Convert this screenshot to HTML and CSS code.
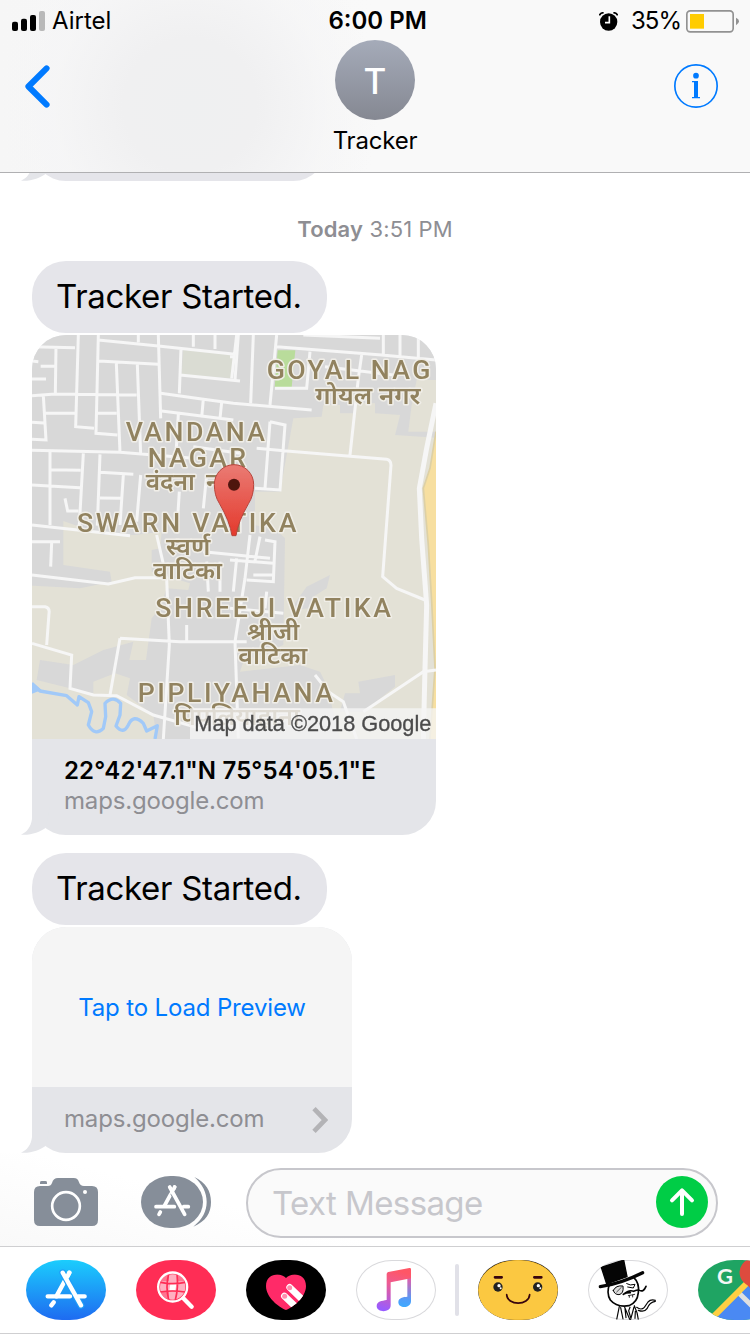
FILE: index.html
```html
<!DOCTYPE html>
<html lang="en">
<head>
<meta charset="utf-8">
<title>Messages</title>
<link rel="stylesheet" href="styles.css">
</head>
<body>
<div class="phone">
  <header class="header">
    <div class="status">
      <div class="carrier">
        <svg class="signal" viewBox="0 0 99 60"><rect y="32" width="18" height="28" rx="6"/><rect x="27" y="23" width="18" height="37" rx="6"/><rect x="54" y="12" width="18" height="48" rx="6"/><rect x="81" width="18" height="60" rx="6" fill="#b9b9b9"/></svg>
        <span class="carrier-name">Airtel</span>
      </div>
      <div class="clock">6:00 PM</div>
      <div class="power">
        <svg class="alarm" viewBox="0 0 57 57"><circle cx="29" cy="30" r="26"/><path d="M1 10Q5 2 14 2M43 2Q52 2 56 10" fill="none" stroke="#000" stroke-width="5"/><path d="M31 13V32H18" fill="none" stroke="#fff" stroke-width="5"/></svg>
        <span class="percent">35%</span>
        <svg class="battery" viewBox="0 0 159 69"><rect x="2.5" y="2.5" width="139" height="63" rx="10" fill="none" stroke="#929292" stroke-width="5"/><rect x="12" y="12" width="42" height="44" fill="#fc0"/><path d="M150 23Q159 27 159 34T150 46Z" fill="#929292"/></svg>
      </div>
    </div>
    <div class="nav">
      <svg class="back" viewBox="0 0 74 128"><path d="M64 10L10 64L64 118" fill="none" stroke="#007aff" stroke-width="18" stroke-linecap="round" stroke-linejoin="round"/></svg>
      <div class="contact">
        <div class="avatar">T</div>
        <div class="name">Tracker</div>
      </div>
      <svg class="info" viewBox="0 0 132 132"><circle cx="66" cy="66" r="63.5" fill="none" stroke="#007aff" stroke-width="5"/><circle cx="66" cy="35" r="8.5" fill="#007aff"/><path d="M54 51H72V99H78V103H54V99H60V55H54Z" fill="#007aff"/></svg>
    </div>
  </header>

  <main class="thread">
    <div class="bubble bubble-cut"><svg class="tail" viewBox="0 0 29 40"><path d="M11 0V24C10 32 6 37 0 39.700C10 40.500 19 37 24.500 33L29 12L20 0Z"/></svg></div>
    <div class="stamp"><b>Today</b> 3:51 PM</div>
    <div class="bubble">Tracker Started.</div>
    <div class="card card-map">
      <svg class="map" viewBox="36 30 1212 1212">
        <defs><filter id="soft" x="0" y="0" width="100%" height="100%"><feGaussianBlur stdDeviation="2.200"/></filter>
        <linearGradient id="pin" x1="0" y1="0" x2="0" y2="1"><stop stop-color="#ea7b74"/><stop offset="1" stop-color="#e4392c"/></linearGradient></defs>
        <g filter="url(#soft)">
        <rect width="1280" height="1280" fill="#d8d8d8"/>
        <g fill="#e3e1d6">
          <path d="M490 75L640 90L635 160L485 148Z" fill="#dadcd3"/>
          <path d="M130 588L250 630L345 630L425 620L420 670L395 675V740L510 775L505 795L440 790L420 850L395 880L378 1005L328 1005L340 950L250 975L160 1020L60 1005L50 1065L150 1090L220 1105L220 1070L285 1045L330 1060L320 1110L400 1170L410 1242H0V780L180 790L275 770L270 740L130 720Z"/>
          <path d="M820 280L905 275L910 240L960 240V265H1000L1005 235H1065V265L1140 270L1125 330L1248 338V1242H960L920 1080L900 1040L840 1020L660 1040L670 1010L790 960L795 640L775 620L705 600L705 500L780 500Z"/>
          <path d="M1190 165H1248V320H1165L1175 240Z"/>
        </g>
        <path d="M860 785L930 750L920 790L880 815L870 850L810 855ZM975 1105L1020 1105L1015 1070L1125 1050V1085L1030 1160H960Z" fill="#d8d8d8"/>
        <path d="M773 76H826L815 187H764Z" fill="#b9dc9b"/>
        <path d="M1248 320L1230 430L1210 490L1225 660L1235 830L1245 1030L1230 1242H1260V320Z" fill="#f7dfa0"/>
        <path d="M1248 320L1230 430L1210 490L1225 660L1235 830L1245 1030L1230 1242" fill="none" stroke="#ddd0a5" stroke-width="5"/>
        <g fill="none" stroke="#f6f6f6" stroke-width="9">
          <path d="M36 65L165 68M108 65L106 205M175 30L167 305L222 310M235 30L228 325L292 330M235 45L415 63L645 88M236 108L415 118M415 30L422 280M355 30V52M520 30V65M585 30V72M650 30L635 160M483 70L478 205M480 150L660 168M36 212L105 207L350 210M36 108L55 110M62 124L105 124M36 162L78 162M70 212L78 345L36 343M36 292L72 294M75 265L165 265M228 265L290 265M289 115L300 382M352 118L362 388M36 376L300 382L520 400"/>
          <path d="M422 205L545 222L640 235L875 255M425 258L640 285M550 222L545 278M605 232L600 280M475 268L468 385M90 380V600M36 480L180 488M90 434L182 436M190 385L178 600M240 388L232 602M240 442L340 448M310 450L300 600M240 519L304 520M362 450L350 590M135 520L143 558H175M36 600L330 632M520 365L660 385M478 500L470 625M560 450L550 550M660 480V625"/>
          <path d="M655 30L645 165M770 30L750 240M700 30L692 235M630 95H645M770 65L1085 90L1248 105M850 30L1080 40M1090 30V90M1140 30V100M1195 30V105M870 80L860 190L765 190M1025 90L1015 160L990 390M915 125L1120 150M750 290L795 300L780 495L705 490M750 290L735 490M710 370L800 378L1100 403Q1112 405 1113 420L1088 755L1130 790L1215 825"/>
          <path d="M690 630L675 760L645 950L655 1240M630 705L760 715M720 635L705 708M735 645L765 650L760 770L680 765M700 750H760M740 800L735 850M630 850L790 865M560 710L565 800M600 710V800M650 700L640 800M36 650H120M95 652L92 725M36 750L265 777L345 758H430M410 630L440 760L448 960L430 1242M300 940L480 950L680 950M500 900V950M300 940L270 1110M36 845H75Q90 848 87 865L80 960M36 955L155 990L150 1090L220 1110L290 1112L400 1170L540 1210M550 680L750 700M885 1050L925 1100L970 1130L1010 1242M1248 1035L1210 1040L1030 1160"/>
          <path d="M1248 235L1220 370L1198 490L1205 640L1220 840L1215 1030L1210 1242" stroke-width="15"/>
        </g>
        <path d="M36 1075L60 1098L140 1112L172 1140L177 1115L205 1133L215 1160L205 1200Q225 1235 250 1210L257 1175L255 1135Q280 1110 302 1135L300 1170L288 1203Q310 1230 325 1200Q340 1165 370 1195L380 1218L412 1202L405 1242" fill="none" stroke="#a1c9f8" stroke-width="10" stroke-linejoin="round"/>
        <path d="M36 1072L65 1095L36 1106Z" fill="#a1c9f8"/>
        <g class="place">
          <text x="740" y="161" textLength="491">GOYAL NAG</text>
          <text x="317" y="348" textLength="418">VANDANA</text>
          <text x="383" y="427" textLength="295">NAGAR</text>
          <text x="171" y="621" textLength="658">SWARN VATIKA</text>
          <text x="406" y="875" textLength="707">SHREEJI VATIKA</text>
          <text x="353" y="1130" textLength="586">PIPLIYAHANA</text>
        </g>
        <g class="place hindi" lang="hi">
          <text x="886" y="236" textLength="316" lengthAdjust="spacingAndGlyphs">गोयल नगर</text>
          <text x="377" y="495" textLength="148" lengthAdjust="spacingAndGlyphs">वंदना</text>
          <text x="558" y="495">न</text>
          <text x="438" y="690" textLength="133" lengthAdjust="spacingAndGlyphs">स्वर्ण</text>
          <text x="400" y="763" textLength="206" lengthAdjust="spacingAndGlyphs">वाटिका</text>
          <text x="681" y="945" textLength="157" lengthAdjust="spacingAndGlyphs">श्रीजी</text>
          <text x="655" y="1018" textLength="207" lengthAdjust="spacingAndGlyphs">वाटिका</text>
          <text x="462" y="1200" textLength="378" lengthAdjust="spacingAndGlyphs">पिपलियाहाना</text>
        </g>
        <path d="M510 1150H1248V1242H510Z" fill="#f5f5f5" opacity=".78"/>
        <text class="credit" x="523" y="1217" textLength="711" lengthAdjust="spacingAndGlyphs">Map data ©2018 Google</text>
        <path d="M636 632Q630 590 598 535Q583 512 583 478A59 59 0 0 1 701 478Q701 512 686 535Q654 590 648 632Z" fill="url(#pin)" stroke="#b7443b" stroke-width="3"/>
        <circle cx="642" cy="479" r="18" fill="#501410"/>
        </g>
      </svg>
      <div class="caption">
        <div class="title">22°42'47.1"N 75°54'05.1"E</div>
        <div class="site">maps.google.com</div>
      </div>
      <svg class="tail" viewBox="0 0 29 40"><path d="M11 0V24C10 32 6 37 0 39.700C10 40.500 19 37 24.500 33L29 12L20 0Z"/></svg>
    </div>
    <div class="bubble bubble-next">Tracker Started.</div>
    <div class="card card-preview">
      <div class="load">Tap to Load Preview</div>
      <div class="caption caption-row">
        <div class="site">maps.google.com</div>
        <svg class="chevron" viewBox="0 0 46 78"><path d="M5 5L38 39L5 73" fill="none" stroke="#b3b3b6" stroke-width="14"/></svg>
      </div>
      <svg class="tail" viewBox="0 0 29 40"><path d="M11 0V24C10 32 6 37 0 39.700C10 40.500 19 37 24.500 33L29 12L20 0Z"/></svg>
    </div>
  </main>

  <div class="compose">
    <svg class="camera" viewBox="0 0 192 144"><path d="M18 24H42Q51 24 54 15Q58 0 72 0H119Q132 0 135 13Q138 24 150 24H174Q192 24 192 42V126Q192 144 174 144H18Q0 144 0 126V42Q0 24 18 24Z"/><path d="M18 18V13Q18 9 23 9H34Q39 9 39 13V18Z"/><circle cx="96" cy="84" r="41.500" fill="none" stroke="#fff" stroke-width="8"/><circle cx="153" cy="42" r="6" fill="#fff"/></svg>
    <svg class="apps" viewBox="0 0 210 156"><rect width="186" height="156" rx="88" ry="78"/><path d="M160 3C195 20 210 45 210 78C210 111 195 136 157 152C185 130 197 105 197 78C197 50 185 25 160 3Z"/><g fill="none" stroke="#fff" stroke-width="11" stroke-linecap="round"><path d="M101 33L70 90"/><path d="M86 33L131 115" stroke="#868e99" stroke-width="17"/><path d="M86 33L131 115M101 33L92 50M45 92H100M128 92H142M58 108L54 115"/></g></svg>
    <div class="field">
      <span class="placeholder">Text Message</span>
      <svg class="send" viewBox="0 0 156 156"><circle cx="78" cy="78" r="78" fill="#00cd46"/><path d="M78 114V44M48 73L78 43L108 73" fill="none" stroke="#fff" stroke-width="12" stroke-linecap="round" stroke-linejoin="round"/></svg>
    </div>
  </div>

  <footer class="drawer">
    <div class="app app-store"><svg viewBox="0 0 240 180" fill="none" stroke="#fff" stroke-width="13" stroke-linecap="round"><path d="M130 38L91 109"/><path d="M110 38L165 136" stroke="#1f9df8" stroke-width="20"/><path d="M110 38L165 136M130 38L122 53M65 109H132M156 109H176M83 127L76 136"/></svg></div>
    <div class="app app-search"><svg viewBox="0 0 240 180"><circle cx="110" cy="81" r="38" fill="#ffb0c1"/><path d="M72 64H99V44Q76 48 72 64ZM122 44V64H147Q140 46 122 44ZM72 94H99V118Q80 114 72 94Z" fill="#ff7490"/><path d="M103 72H121L118 91H100Z" fill="#fff"/><path d="M74 67Q110 75 147 67M72 96Q110 90 147 96M98 42Q88 80 98 120M123 42Q128 80 118 120" stroke="#ff2d55" stroke-width="5" fill="none"/><circle cx="110" cy="81" r="43.500" fill="none" stroke="#fff" stroke-width="7"/><path d="M142 115L167 140" stroke="#fff" stroke-width="13" stroke-linecap="round"/></svg></div>
    <div class="app app-touch"><svg viewBox="0 0 240 180"><defs><clipPath id="heart"><path d="M120 54C103 36 60 40 60 78C60 113 99 142 120 150C141 142 180 113 180 78C180 40 137 36 120 54Z"/></clipPath></defs><g clip-path="url(#heart)"><path d="M50 30H190V160H50Z" fill="#ff2a68"/><g stroke="#fff" stroke-width="20" stroke-linecap="round"><path d="M131 82L190 139M115 108L165 156"/></g><g fill="#ff8eae"><circle cx="131" cy="83" r="7.500"/><circle cx="116" cy="109" r="7.500"/></g></g></svg></div>
    <div class="app app-music"><svg viewBox="0 0 240 180"><defs><linearGradient id="ml" gradientUnits="userSpaceOnUse" x1="120" y1="30" x2="85" y2="150"><stop stop-color="#ff5666"/><stop offset=".35" stop-color="#ed5b92"/><stop offset="1" stop-color="#985cff"/></linearGradient><linearGradient id="mr" gradientUnits="userSpaceOnUse" x1="160" y1="30" x2="150" y2="140"><stop stop-color="#f95c73"/><stop offset=".3" stop-color="#d065b5"/><stop offset=".8" stop-color="#539cf8"/><stop offset="1" stop-color="#3fa9ff"/></linearGradient></defs><path d="M154 50H165V124C165 146 127 147 127 127C127 113 141 111 154 110Z" fill="url(#mr)"/><path d="M92 42Q92 37 97 36L160 24Q165 23 165 28V55L104 67V136C104 160 62 158 62 139C62 123 78 123 92 120Z" fill="url(#ml)"/></svg></div>
    <div class="divider"></div>
    <div class="app app-smile"><svg viewBox="0 0 240 180"><rect width="240" height="180" fill="#292724"/><rect x="1" y="1" width="238" height="178" rx="112" ry="91" fill="#efad12"/><path d="M1 90C1 40 55 1 120 1S239 40 239 90C236 135 203 168 160 179H90C38 176 1 135 1 90Z" fill="#fbc841"/><path d="M51 52H71M169 52H190" stroke="#37050e" stroke-width="8" stroke-linecap="round"/><g fill="#222"><circle cx="60" cy="81" r="14"/><circle cx="179" cy="81" r="14"/></g><g fill="#fff"><circle cx="63" cy="77" r="5"/><circle cx="181" cy="77" r="5"/><circle cx="68" cy="85" r="3"/><circle cx="187" cy="85" r="3"/></g><path d="M86 104C88 138 153 138 155 104" fill="none" stroke="#37050e" stroke-width="5" stroke-linecap="round"/></svg></div>
    <div class="app app-gent"><svg viewBox="0 0 240 180" fill="none" stroke="#050505" stroke-width="4" stroke-linecap="round"><path d="M65 72Q54 98 67 120Q86 143 123 137Q148 128 151 98Q155 69 137 52" fill="#fff" stroke-width="5"/><path d="M40 22L107 0L117 50L56 72Z" fill="#050505"/><path d="M37 80Q100 70 164 38" stroke-width="10"/><path d="M76 91Q84 75 105 78Q108 101 93 104Q79 104 76 91Z" fill="#ddd" stroke-width="3"/><path d="M86 96L100 82" stroke-width="2"/><path d="M116 71Q126 78 141 73L136 84L119 81" stroke-width="3"/><path d="M106 103Q123 88 137 94Q151 88 155 91Q166 98 174 79M106 103L115 99L127 98" stroke-width="5"/><path d="M121 107L140 103M124 112V108M134 111V106" stroke-width="2.500"/><path d="M94 139L86 179M98 143L105 177M139 137Q149 158 151 179M110 142L125 178M138 141L128 178M111 146L114 173M126 142L122 152L128 173M142 154L141 175M146 142Q160 152 169 142L180 126Q188 117 202 121M151 151Q169 158 177 146Q185 126 202 124" stroke-width="3.500"/></svg></div>
    <div class="app app-maps"><svg viewBox="0 0 240 180"><path d="M45 180L150 75L240 165V180Z" fill="#4a89f3"/><path d="M122 98L210 186" stroke="#dedfe0" stroke-width="15"/><path d="M42 174L150 66" stroke="#ffcf42" stroke-width="18"/><path d="M166 105Q160 83 143 72A42 42 0 1 1 199 64Q174 86 170 105Z" fill="#dd4b3e"/><text x="57" y="72" textLength="48" lengthAdjust="spacingAndGlyphs">G</text></svg></div>
  </footer>
</div>
</body>
</html>
```
FILE: styles.css
```css
* { box-sizing: border-box; }
body { margin: 0; background: #fff; color: #000; font-family: Inter, "Liberation Sans", sans-serif; }
svg { display: block; flex: none; }
.phone { width: 750px; height: 1334px; display: flex; flex-direction: column; overflow: hidden; }

.header {
  flex: none; height: 173px; border-bottom: 1px solid #b0b0b2;
  background: radial-gradient(ellipse 190px 190px at 190px 105px, #eff0f1 0, #f0f0f1 35%, rgba(245,245,246,.7) 72%, rgba(248,248,248,0) 100%), linear-gradient(90deg, #f6f6f6, #f9f9f9 50%);
}
.status { height: 40px; display: grid; grid-template-columns: 1fr 98px 1fr; align-items: center; padding: 1px 11px 0 12px; font-size: 24px; line-height: 40px; }
.carrier { display: flex; align-items: center; gap: 7px; }
.signal { width: 33px; height: 20px; }
.clock { padding-left: 2px; font-weight: 600; white-space: nowrap; }
.power { display: flex; align-items: center; justify-content: flex-end; }
.alarm { width: 19px; height: 19px; margin-right: 13px; }
.percent { width: 49px; margin-right: 6px; letter-spacing: -1px; }
.battery { width: 53px; height: 23px; }
.nav { display: grid; grid-template-columns: 1fr 134px 1fr; padding: 0 32px 0 25px; }
.back { width: 25px; height: 43px; margin-top: 25px; }
.contact { display: flex; flex-direction: column; align-items: center; padding-left: 7px; }
.avatar { width: 80px; height: 80px; border-radius: 50%; background: linear-gradient(#a5abb9, #858892); color: #fff; font-size: 35px; font-weight: 500; line-height: 82px; text-align: center; }
.name { font-size: 24px; line-height: 42px; letter-spacing: -.2px; white-space: nowrap; }
.info { width: 44px; height: 44px; margin-top: 24px; justify-self: end; }

.thread { flex: none; height: 980px; padding-left: 32px; display: flex; flex-direction: column; align-items: flex-start; }
.bubble { position: relative; width: 295px; height: 72px; flex: none; border-radius: 34px; background: #e5e5ea; padding-left: 24px; font-size: 33px; letter-spacing: -.3px; line-height: 70px; white-space: nowrap; }
.bubble-cut { margin-top: -64px; z-index: -1; }
.bubble-next { margin-top: 18px; }
.stamp { width: 100%; padding-right: 32px; height: 80px; line-height: 97px; text-align: center; color: #8e8e93; font-size: 22px; letter-spacing: .15px; }
.stamp b { font-weight: 600; }
.card { position: relative; flex: none; margin-top: 2px; border-radius: 34px; background: #e4e5e9; }
.card-map { width: 404px; height: 500px; }
.map { width: 404px; height: 404px; border-radius: 34px 34px 0 0; }
.place { font: 500 80px Roboto, sans-serif; fill: #91825e; stroke: #f0eee8; stroke-width: 9px; stroke-linejoin: round; paint-order: stroke; }
.hindi { font: 600 72px "Noto Sans Devanagari", "Noto Sans", sans-serif; }
.credit { font: 68px "Liberation Sans", sans-serif; fill: #4c4c4c; stroke: #4c4c4c; stroke-width: 1px; }
.caption { padding: 17px 32px 0; font-size: 24px; line-height: 30px; white-space: nowrap; }
.title { font-weight: 600; letter-spacing: .16px; }
.site { color: #8e8e93; letter-spacing: -.16px; }
.card-preview { width: 320px; height: 226px; }
.load { height: 160px; border-radius: 34px 34px 0 0; background: #f5f5f5; color: #007aff; font-size: 24px; letter-spacing: -.15px; line-height: 162px; text-align: center; }
.caption-row { height: 66px; padding: 0 24px 2px 32px; display: flex; align-items: center; justify-content: space-between; }
.chevron { width: 16px; height: 26px; margin-top: 2px; }
.tail { position: absolute; left: -11px; bottom: 0; width: 29px; height: 40px; fill: #e4e5e9; }

.compose { flex: none; height: 93px; padding: 15px 32px 0 34px; display: flex; background: linear-gradient(15deg, #f9f9f9, #fff 35%); }
.camera { width: 64px; height: 48px; margin-top: 10px; fill: #868e99; }
.apps { width: 70px; height: 52px; margin: 8px 35px 0 43px; fill: #868e99; }
.field { width: 472px; height: 70px; border: 2px solid #c7c7cc; border-radius: 35px; background: #fafafa; padding: 0 8px 0 24px; display: flex; align-items: center; justify-content: space-between; }
.placeholder { color: #c7c7cc; font-size: 33px; letter-spacing: -.6px; white-space: nowrap; }
.send { width: 52px; height: 52px; margin-bottom: 2px; }

.drawer { flex: none; width: 780px; height: 88px; border: solid #cfcfd1; border-width: 1px 0; padding: 13px 0 0 26px; display: flex; gap: 30px; }
.app { flex: none; width: 80px; height: 60px; border-radius: 36px / 30px; overflow: hidden; }
.app svg { width: 80px; height: 60px; }
.app-store { background: linear-gradient(#1bcdfd, #1e6bf1); }
.app-search { background: #ff2d55; }
.app-touch { background: #000; }
.app-music, .app-gent { box-shadow: inset 0 0 0 1px #d9d9dc; }
.divider { flex: none; width: 4px; height: 52px; margin: 4px -11px 0; border-radius: 2px; background: #e1e1e8; }
.app-maps { background: #1fa463; }
.app-maps text { font: 700 62px Lato, sans-serif; fill: #f4f7f5; }
```
